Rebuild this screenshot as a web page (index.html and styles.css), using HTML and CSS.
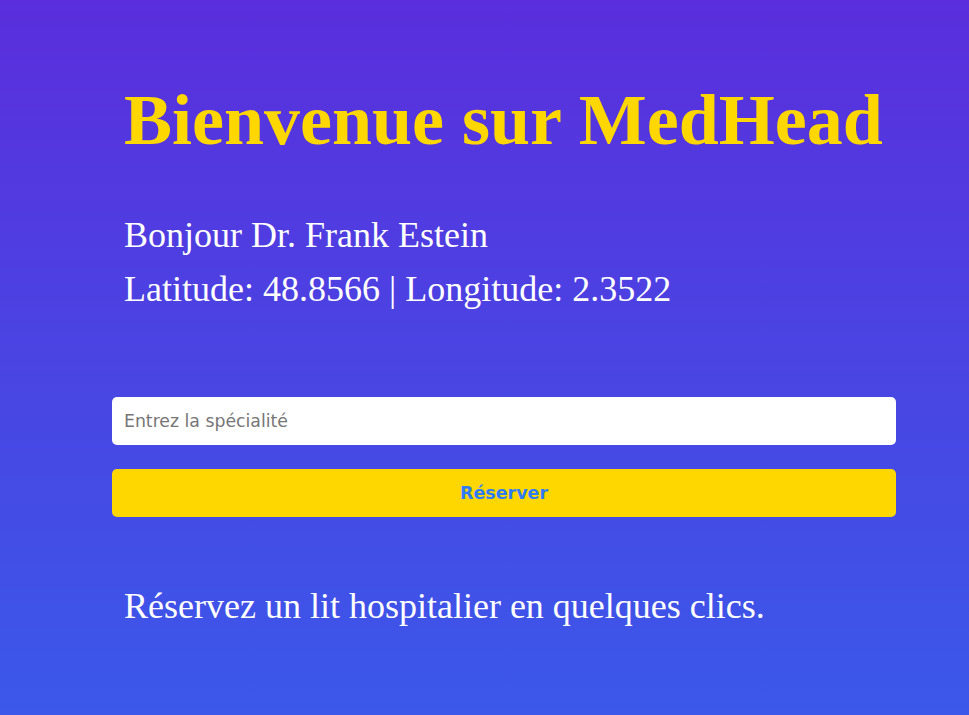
FILE: index.html
```html
<!DOCTYPE html>
<html lang="fr">
<head>
<meta charset="utf-8">
<title>MedHead</title>
<link rel="stylesheet" href="styles.css">
</head>
<body>
<main class="page">
  <h1 class="title">Bienvenue sur MedHead</h1>
  <div class="info">
    <p>Bonjour Dr. Frank Estein</p>
    <p>Latitude: 48.8566 | Longitude: 2.3522</p>
  </div>
  <form class="booking" onsubmit="return false">
    <input class="field" type="text" placeholder="Entrez la spécialité">
    <button class="btn" type="submit">Réserver</button>
  </form>
  <p class="tagline">Réservez un lit hospitalier en quelques clics.</p>
</main>
</body>
</html>
```

FILE: styles.css
```css
html, body {
  margin: 0;
  padding: 0;
  height: 100%;
}

body {
  min-height: 100vh;
  background: linear-gradient(to bottom, #5a2edc 0%, #4a44e3 50%, #3b58ea 100%);
  font-family: "Liberation Serif", "Times New Roman", serif;
  color: #ffffff;
  overflow: hidden;
}

.page {
  width: 784px;
  padding: 77px 0 0 112px;
  box-sizing: content-box;
}

.title {
  margin: 0 0 45px;
  padding: 0 12px;
  font-family: "Liberation Serif", "Times New Roman", serif;
  font-weight: 700;
  font-size: 72px;
  line-height: 86px;
  color: #ffd700;
  white-space: nowrap;
}

.info p {
  margin: 0;
  padding: 0 12px;
  font-size: 36px;
  line-height: 54px;
}

.booking {
  margin: 81px 0 0;
  display: flex;
  flex-direction: column;
  gap: 24px;
}

.field {
  height: 48px;
  box-sizing: border-box;
  border: none;
  border-radius: 5px;
  padding: 0 12px;
  background: #ffffff;
  font-family: "DejaVu Sans", Verdana, sans-serif;
  font-size: 17.3px;
  color: #333333;
  outline: none;
}

.field::placeholder {
  color: #767676;
  opacity: 1;
}

.btn {
  height: 48px;
  border: none;
  border-radius: 5px;
  background: #ffd700;
  font-family: "DejaVu Sans", Verdana, sans-serif;
  font-weight: 700;
  font-size: 17.5px;
  color: #2f7cf6;
  cursor: pointer;
  padding: 0;
}

.tagline {
  margin: 62px 0 0;
  padding: 0 12px;
  font-size: 36px;
  line-height: 54px;
}
```
